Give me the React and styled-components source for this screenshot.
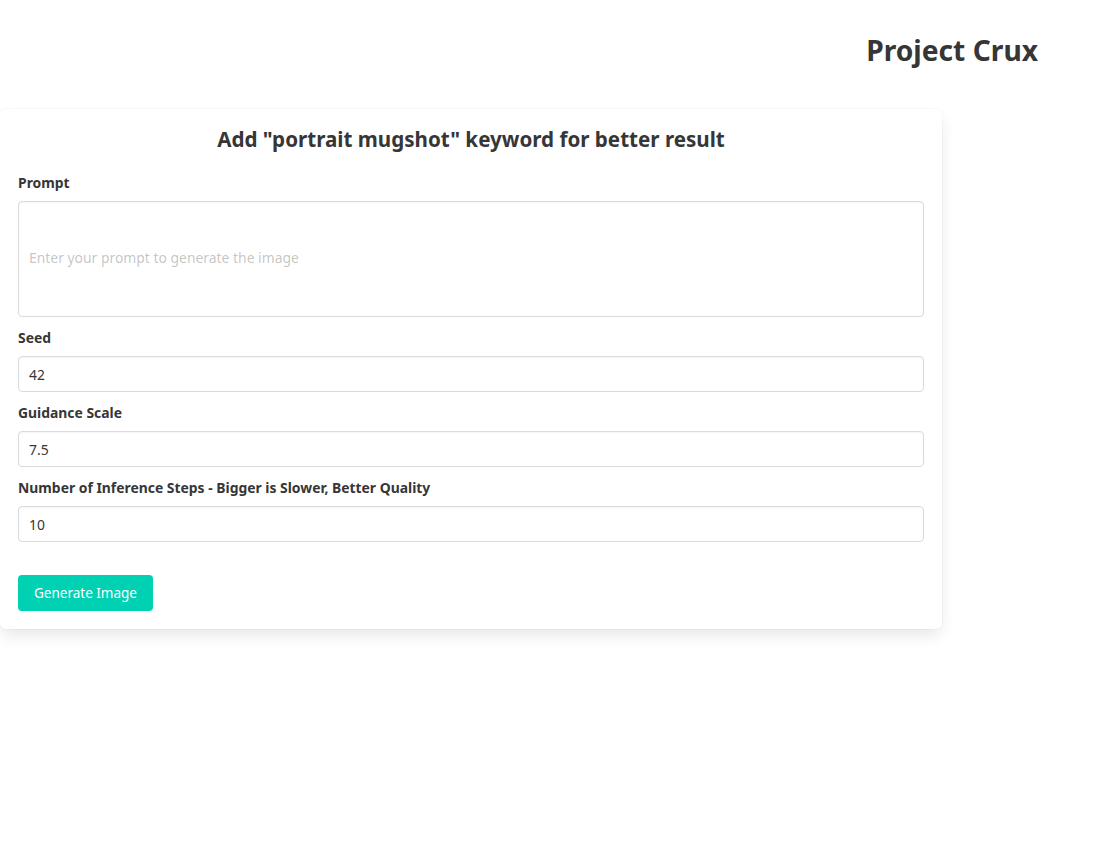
import React from "react";
import styled, { createGlobalStyle } from "styled-components";

const GlobalStyle = createGlobalStyle`
  html, body {
    margin: 0;
    padding: 0;
    background: #ffffff;
    font-family: "Noto Sans", "Open Sans", sans-serif;
    color: #4a4a4a;
  }
`;

const Page = styled.div`
  display: flex;
  flex-direction: column;
  min-height: 843px;
`;

const Header = styled.header`
  display: flex;
  justify-content: flex-end;
  padding: 28px 64px 0 0;
`;

const Brand = styled.h1`
  margin: 0;
  font-size: 28.2px;
  line-height: 44px;
  font-weight: 700;
  color: #363636;
`;

const Card = styled.div`
  width: 942px;
  box-sizing: border-box;
  margin-top: 37px;
  padding: 14px 18px 18px;
  background: #fff;
  border-radius: 6px;
  box-shadow: 0 0.5em 1em -0.125em rgba(10, 10, 10, 0.1),
    0 0 0 1px rgba(10, 10, 10, 0.02);
`;

const CardTitle = styled.h2`
  margin: 0 0 18px;
  text-align: center;
  font-size: 20.6px;
  line-height: 32px;
  font-weight: 700;
  color: #363636;
`;

const Field = styled.div`
  display: flex;
  flex-direction: column;
  gap: 8px;
  margin-bottom: 11px;
`;

const Label = styled.label`
  font-size: 13.9px;
  line-height: 20px;
  font-weight: 700;
  color: #363636;
`;

const inputBase = `
  box-sizing: border-box;
  width: 100%;
  border: 1px solid #dbdbdb;
  border-radius: 4px;
  background: #fff;
  color: #363636;
  font-family: "Noto Sans", "Open Sans", sans-serif;
  font-size: 13.9px;
  outline: none;
  box-shadow: inset 0 0.0625em 0.125em rgba(10, 10, 10, 0.05);
  &::placeholder {
    color: rgba(54, 54, 54, 0.3);
  }
`;

const Input = styled.input`
  ${inputBase}
  height: 36px;
  padding: 0 10px;
`;

const TextArea = styled.textarea`
  ${inputBase}
  height: 116px;
  padding: 46px 10px 10px;
  resize: none;
  line-height: 20px;
`;

const Actions = styled.div`
  display: flex;
  padding-top: 22px;
`;

const Button = styled.button`
  height: 36px;
  padding: 0 16px;
  border: none;
  border-radius: 4px;
  background: #00d1b2;
  color: #fff;
  font-family: "Noto Sans", "Open Sans", sans-serif;
  font-size: 13.5px;
  cursor: pointer;
`;

const fields = [
  { label: "Seed", value: "42" },
  { label: "Guidance Scale", value: "7.5" },
  { label: "Number of Inference Steps - Bigger is Slower, Better Quality", value: "10" },
];

export default function App() {
  return (
    <Page>
      <GlobalStyle />
      <Header>
        <Brand>Project Crux</Brand>
      </Header>
      <Card>
        <CardTitle>Add "portrait mugshot" keyword for better result</CardTitle>
        <Field>
          <Label>Prompt</Label>
          <TextArea placeholder="Enter your prompt to generate the image" />
        </Field>
        {fields.map((f) => (
          <Field key={f.label}>
            <Label>{f.label}</Label>
            <Input defaultValue={f.value} />
          </Field>
        ))}
        <Actions>
          <Button>Generate Image</Button>
        </Actions>
      </Card>
    </Page>
  );
}
